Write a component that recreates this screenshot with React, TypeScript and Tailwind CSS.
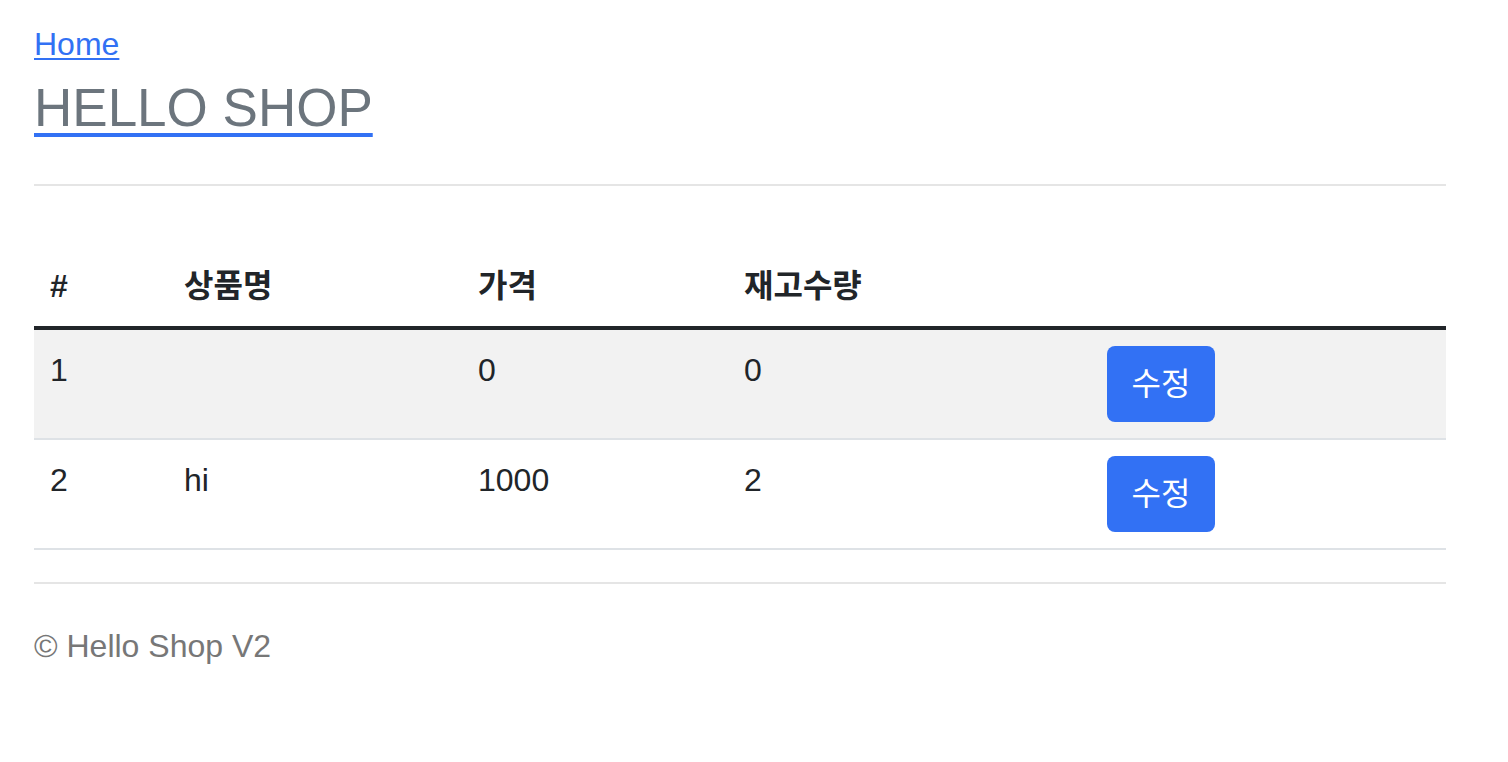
const items = [
  { id: 1, name: "", price: 0, stock: 0 },
  { id: 2, name: "hi", price: 1000, stock: 2 },
];

const font = "font-['Liberation_Sans','Noto_Sans_CJK_KR',sans-serif]";

export default function App() {
  return (
    <div className={`min-h-screen bg-white text-[#212529] ${font}`}>
      <div className="ml-[34px] w-[1412px] pt-[20px]">
        {/* header */}
        <div className="border-b-2 border-[#e5e5e5] pb-[36px]">
          <a href="#" className="block w-fit text-[32px] leading-[48px] text-[#3271f4] underline decoration-2 underline-offset-[3px]">
            Home
          </a>
          <a href="#" className="block w-fit text-[#3271f4] underline decoration-[4px] underline-offset-[7px]">
            <h3 className="text-[53px] leading-[80px] text-[#6c757d]">HELLO SHOP</h3>
          </a>
        </div>

        {/* item list */}
        <table className="mt-[60px] w-full border-collapse text-left text-[32px] leading-[48px]">
          <thead>
            <tr className="border-b-4 border-[#212529]">
              <th className="w-[134px] p-[16px] font-bold">#</th>
              <th className="w-[294px] p-[16px] font-bold">상품명</th>
              <th className="w-[266px] p-[16px] font-bold">가격</th>
              <th className="w-[363px] p-[16px] font-bold">재고수량</th>
              <th className="p-[16px]"></th>
            </tr>
          </thead>
          <tbody>
            {items.map((item, i) => (
              <tr
                key={item.id}
                className={`border-b-2 border-[#dee2e6] align-top ${i % 2 === 0 ? "bg-[#f2f2f2]" : "bg-white"}`}
              >
                <td className="p-[16px]">{item.id}</td>
                <td className="p-[16px]">{item.name}</td>
                <td className="p-[16px]">{item.price}</td>
                <td className="p-[16px]">{item.stock}</td>
                <td className="p-[16px]">
                  <button className="flex h-[76px] w-[108px] items-center justify-center rounded-[8px] bg-[#3271f4] text-[32px] leading-[48px] text-white">
                    수정
                  </button>
                </td>
              </tr>
            ))}
          </tbody>
        </table>

        {/* footer */}
        <div className="mt-[32px] border-t-2 border-[#e5e5e5] pt-[38px] text-[32px] leading-[48px] text-[#777777]">
          © Hello Shop V2
        </div>
      </div>
    </div>
  );
}
